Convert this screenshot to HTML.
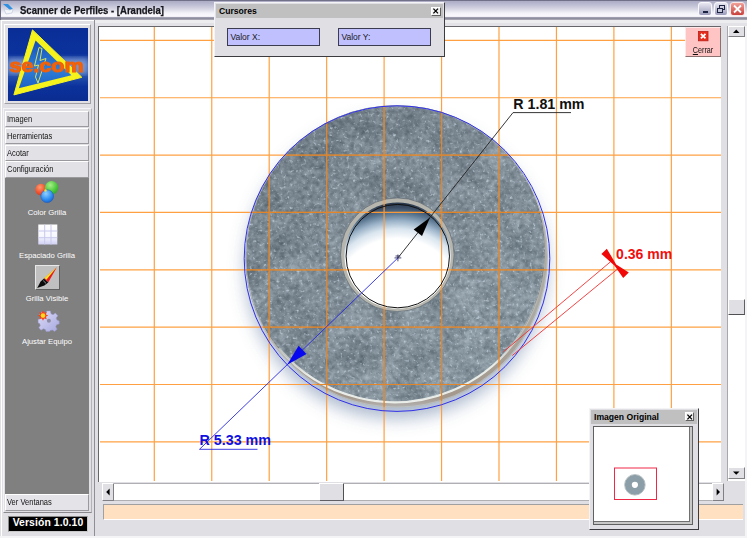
<!DOCTYPE html>
<html lang="es">
<head>
<meta charset="utf-8">
<title>Scanner de Perfiles - [Arandela]</title>
<style>
html,body{margin:0;padding:0;}
body{width:747px;height:538px;overflow:hidden;background:#f4f4f6;position:relative;font-family:"Liberation Sans",sans-serif;color:#000;}
.abs{position:absolute;}
#win{left:0;top:0;width:744.8px;height:536px;background:#e0dfe3;}
#titlebar{left:0;top:0;width:747px;height:20px;background:linear-gradient(to bottom,#6c6c84 0px,#74748c 0.8px,#aeaec6 1.4px,#b4b4cc 3px,#d0d0e0 8px,#f2f2f8 13px,#fafafd 16.4px,#a0a0b4 17.4px,#8c8c9e 18.2px,#90909e 19.2px,#c8c8d0 20px);border-left:1px solid #6a6a82;box-sizing:border-box;}
#title{left:20px;top:3.8px;font-weight:bold;font-size:10.5px;line-height:13px;color:#16161c;-webkit-text-stroke:0.25px #16161c;white-space:nowrap;transform-origin:0 0;transform:scaleX(0.907);}
#band1{left:1px;top:20px;width:746px;height:3px;background:#ededf0;}
#band2{left:1px;top:23px;width:746px;height:3px;background:#e2e2e7;}
.tb{top:2px;width:14px;height:14px;border-radius:3px;box-sizing:border-box;}
/* left panel */
#lp{left:1px;top:20px;width:93px;height:516px;background:#e0dfe3;border-right:1.6px solid #8e8e94;box-shadow:inset 1px 1px 0 #fff;}
#logobox{left:4px;top:24px;width:87px;height:80px;box-sizing:border-box;border:1px solid #fff;border-right-color:#a0a0a4;border-bottom-color:#a0a0a4;background:#e0dfe3;}
.mbtn{left:5px;width:84px;height:16px;box-sizing:border-box;background:#e2e1e6;border:1px solid #fff;border-right-color:#9a9a9e;border-bottom-color:#9a9a9e;font-size:8.2px;line-height:15px;padding-left:1px;color:#111;white-space:nowrap;}
.mbtn span{display:inline-block;transform-origin:0 50%;transform:scaleX(0.92);}
#gray{left:5px;top:178px;width:84px;height:316px;background:#808080;}
.il{left:5px;width:84px;text-align:center;color:#fff;font-size:7.7px;line-height:10px;white-space:nowrap;}
#ver{left:8px;top:516px;width:80px;height:16px;box-sizing:border-box;background:#000;border:1px solid #8a8a8a;border-right-color:#c8c8c8;border-bottom-color:#c8c8c8;color:#fff;font-weight:bold;font-size:10.4px;line-height:12.6px;text-align:center;letter-spacing:0.1px;white-space:nowrap;}
/* canvas */
#cvwrap{left:98.4px;top:25.6px;width:623px;height:456px;background:#fff;border-left:1.4px solid #66666a;border-top:1.4px solid #66666a;box-sizing:border-box;}
#cv{left:100px;top:27px;width:621px;height:454px;background:#fff;overflow:hidden;}
.sbtn{background:#e0dfe3;box-sizing:border-box;border:1px solid #fff;border-right-color:#808084;border-bottom-color:#808084;}
#status{left:103px;top:504px;width:640px;height:16px;background:#ffe0c0;box-sizing:border-box;border-top:1px solid #a0a0a0;border-left:1px solid #a0a0a0;border-bottom:1px solid #fff;}
.fw{background:#e0dfe3;box-sizing:border-box;border:1px solid #f4f4f6;border-right:1.6px solid #3c3c40;border-bottom:1.6px solid #3c3c40;}
.ft{background:#c0c0c0;font-weight:bold;font-size:8.6px;line-height:14.5px;color:#000;white-space:nowrap;box-sizing:border-box;padding-left:3px;}
.fx{background:#f4f4f4;box-sizing:border-box;border:1px solid #fff;border-right-color:#606060;border-bottom-color:#606060;}
.vb{background:#c0c0ff;border:1px solid #3c3c50;box-sizing:border-box;font-size:8.5px;line-height:16px;padding-left:2.4px;color:#181818;white-space:nowrap;height:18px;top:27.6px;}
</style>
</head>
<body>
<div id="win" class="abs"></div>
<div id="titlebar" class="abs"></div>
<div id="band1" class="abs"></div>
<div id="band2" class="abs"></div>
<svg class="abs" style="left:1px;top:2.5px" width="15" height="13" viewBox="0 0 15 13"><path d="M2 1 L7 1 L12 6 L9 7 Z" fill="#2f8fe0"/><path d="M3 6 L9 7 L12 6 L11 10 L5 11 Z" fill="#f4f6fa" stroke="#b8c4d8" stroke-width="0.6"/></svg>
<div id="title" class="abs">Scanner de Perfiles - [Arandela]</div>
<div class="abs tb" style="left:698px;background:linear-gradient(#e8e8f2,#9c9cba);border:1px solid #f8f8fc;"></div>
<div class="abs" style="left:703px;top:11px;width:5px;height:2px;background:#1c2340"></div>
<div class="abs tb" style="left:714px;background:linear-gradient(#e8e8f2,#9c9cba);border:1px solid #f8f8fc;"></div>
<svg class="abs" style="left:714px;top:2px" width="14" height="14"><rect x="5.5" y="3.5" width="5" height="4" fill="none" stroke="#1c2340"/><rect x="3.5" y="6.5" width="5" height="4" fill="#c8c8dc" stroke="#1c2340"/></svg>
<div class="abs tb" style="left:730px;width:15px;background:linear-gradient(#f0a098,#c8403c);border:1px solid #f8e8e8;"></div>
<svg class="abs" style="left:730px;top:2px" width="15" height="14"><path d="M4 3.5 L11 10.5 M11 3.5 L4 10.5" stroke="#fff" stroke-width="1.8"/></svg>

<!-- left panel -->
<div id="lp" class="abs"></div>
<div id="logobox" class="abs"></div>
<svg class="abs" style="left:8px;top:28px" width="80" height="73" viewBox="0 0 80 73">
<defs>
<linearGradient id="lgbg" x1="0" y1="0" x2="0" y2="1"><stop offset="0" stop-color="#0a2e96"/><stop offset="0.35" stop-color="#0b329c"/><stop offset="0.5" stop-color="#3a62b4"/><stop offset="0.62" stop-color="#2c58b0"/><stop offset="0.8" stop-color="#0b329c"/><stop offset="1" stop-color="#0a2c90"/></linearGradient>
<linearGradient id="lgtri" x1="0" y1="0" x2="0" y2="1"><stop offset="0" stop-color="#1450b8"/><stop offset="0.6" stop-color="#2f7fd8"/><stop offset="1" stop-color="#1c60c4"/></linearGradient>
<filter id="b1"><feGaussianBlur stdDeviation="0.4"/></filter>
<filter id="b3"><feGaussianBlur stdDeviation="2.5"/></filter>
</defs>
<rect width="80" height="73" fill="url(#lgbg)"/>
<rect x="0" y="30" width="80" height="16" fill="#aac0e8" opacity="0.55" filter="url(#b3)"/>
<g filter="url(#b1)">
<path d="M24.5 1.9 L73.8 49.3 L5.9 66.9 Z" fill="#f6f21c" stroke="#f6f21c" stroke-width="1" stroke-linejoin="round"/><path d="M27.6 12.4 L63.4 47.2 L10.8 60.2 Z" fill="url(#lgtri)"/>
<path d="M31 19.5 L34 20.5 L32 32.5 L38 30.5 L30 55 L27.5 49 L30.5 37 L26.5 38 Z" fill="none" stroke="#e8ee50" stroke-width="0.9"/>
</g>
<text x="1.5" y="43.5" font-family="Liberation Sans, sans-serif" font-weight="bold" font-size="18" fill="#f26408" stroke="#ee6008" stroke-width="1.1" textLength="74" lengthAdjust="spacingAndGlyphs" filter="url(#b1)">se.com</text>
</svg>
<div class="abs mbtn" style="top:111px"><span>Imagen</span></div>
<div class="abs mbtn" style="top:128px"><span>Herramientas</span></div>
<div class="abs mbtn" style="top:144.5px"><span>Acotar</span></div>
<div class="abs mbtn" style="top:161px;height:17px"><span>Configuración</span></div>
<div class="abs" style="left:3px;top:108px;width:89px;height:404.5px;box-sizing:border-box;border:1px solid #f4f4f6;border-right-color:#b4b4b8;border-bottom-color:#8a8a8e;"></div>
<div id="gray" class="abs"></div>
<!-- icons -->
<svg class="abs" style="left:30px;top:178px" width="36" height="30" viewBox="30 178 36 30">
<defs>
<radialGradient id="gr" cx="0.4" cy="0.3" r="0.8"><stop offset="0" stop-color="#ff9a70"/><stop offset="0.6" stop-color="#f0502c"/><stop offset="1" stop-color="#c83818"/></radialGradient>
<radialGradient id="gg" cx="0.4" cy="0.3" r="0.8"><stop offset="0" stop-color="#a8f088"/><stop offset="0.6" stop-color="#4cc83c"/><stop offset="1" stop-color="#2c9828"/></radialGradient>
<radialGradient id="gb" cx="0.4" cy="0.3" r="0.8"><stop offset="0" stop-color="#90d0ff"/><stop offset="0.6" stop-color="#2c8cf0"/><stop offset="1" stop-color="#1858c0"/></radialGradient>
</defs>
<circle cx="41" cy="189.6" r="5.8" fill="url(#gr)"/>
<circle cx="51.6" cy="187.8" r="6.7" fill="url(#gg)"/>
<circle cx="47.2" cy="196.2" r="6.4" fill="url(#gb)" stroke="#1c58b8" stroke-width="0.5"/>
<circle cx="45.5" cy="190.5" r="1.2" fill="#f4e040"/>
</svg>
<div class="abs il" style="top:207.5px">Color Grilla</div>
<svg class="abs" style="left:38px;top:224px" width="20" height="21" viewBox="0 0 20 21">
<defs><linearGradient id="gg2" x1="0" y1="0" x2="0" y2="1"><stop offset="0" stop-color="#ffffff"/><stop offset="0.6" stop-color="#f6f6ff"/><stop offset="1" stop-color="#d0d0f4"/></linearGradient></defs>
<rect x="0.3" y="0.5" width="19" height="20" fill="url(#gg2)"/>
<path d="M6.7 0.5 V20.5 M13 0.5 V20.5 M0.3 7 H19.3 M0.3 13.7 H19.3" stroke="#c8c8ec" stroke-width="1"/>
</svg>
<div class="abs il" style="top:250.5px">Espaciado Grilla</div>
<div class="abs" style="left:35px;top:265px;width:25px;height:25px;box-sizing:border-box;background:#c0c0c0;border:1px solid #e8e8e8;border-right-color:#606060;border-bottom-color:#606060;"></div>
<svg class="abs" style="left:35px;top:265px" width="25" height="25" viewBox="0 0 25 25">
<path d="M21.8 2.2 L13.2 17.4 L9.2 13.6 Z" fill="#e8181c"/>
<path d="M21.4 2.6 L11.4 14.8 L9.4 13 Z" fill="#f8e428"/>
<path d="M9 13.4 L13.2 17.4 L9.4 20.4 L2.2 23 L5.6 16.4 Z" fill="#0c0c0c"/>
<path d="M8.2 15.6 L11 18.4" stroke="#c8c8c8" stroke-width="0.7"/>
</svg>
<div class="abs il" style="top:293.5px">Grilla Visible</div>
<svg class="abs" style="left:35px;top:308px" width="26" height="26" viewBox="35 308 26 26"><defs><linearGradient id="gearg" x1="0" y1="0" x2="1" y2="1"><stop offset="0" stop-color="#dcdcf8"/><stop offset="1" stop-color="#a8a8e0"/></linearGradient></defs>
<g transform="translate(48.6 321)">
<path id="gear" fill="url(#gearg)" stroke="#9494cc" stroke-width="0.5" d="M-1.8 -10 L1.8 -10 L2.4 -7.2 L4.4 -6.3 L6.8 -7.9 L9.3 -5.3 L7.6 -3 L8.4 -0.9 L10.6 0 L10.6 3 L8 3.8 L7.1 5.8 L8.6 8.2 L6 10.4 L3.7 8.9 L1.6 9.6 L0.8 10.4 L-2.6 10.4 L-3.2 8.6 L-5.2 7.8 L-7.6 9.3 L-9.8 6.8 L-8.3 4.5 L-9 2.5 L-10.5 1.9 L-10.5 -1.6 L-8.7 -2.2 L-7.9 -4.2 L-9.2 -6.6 L-6.8 -8.9 L-4.4 -7.4 L-2.4 -8.2 Z"/>
<circle cx="0.3" cy="-0.3" r="2" fill="#8c8ca4"/>
</g>
<path d="M43.0 310.4 L44.2 312.7 L46.7 311.9 L45.9 314.4 L48.2 315.6 L45.9 316.8 L46.7 319.3 L44.2 318.5 L43.0 320.8 L41.8 318.5 L39.3 319.3 L40.1 316.8 L37.8 315.6 L40.1 314.4 L39.3 311.9 L41.8 312.7 Z" fill="#f04420"/>
<circle cx="43" cy="315.6" r="2.3" fill="#ffd820"/>
</svg>
<div class="abs il" style="top:336.5px">Ajustar Equipo</div>
<div class="abs mbtn" style="top:494px;height:17px;background:#e4e3e8;"><span>Ver Ventanas</span></div>
<div id="ver" class="abs">Versión 1.0.10</div>

<!-- canvas area -->
<div id="cvwrap" class="abs"></div>
<div id="cv" class="abs">
<svg class="abs" style="left:0;top:0" width="621" height="454" viewBox="100 27 621 454">
<defs>
<filter id="sh" x="-20%" y="-20%" width="140%" height="140%"><feGaussianBlur stdDeviation="9"/></filter>
<filter id="tex" x="0" y="0" width="100%" height="100%" color-interpolation-filters="sRGB">
<feTurbulence type="fractalNoise" baseFrequency="0.2" numOctaves="3" seed="7" result="n"/>
<feColorMatrix in="n" type="matrix" values="1 0 0 0 0  1 0 0 0 0  1 0 0 0 0  0 0 0 0 1" result="g"/>
<feTurbulence type="fractalNoise" baseFrequency="0.035" numOctaves="2" seed="11" result="n2"/>
<feColorMatrix in="n2" type="matrix" values="0 1 0 0 0  0 1 0 0 0  0 1 0 0 0  0 0 0 0 1" result="g2"/>
<feComposite in="SourceGraphic" in2="g" operator="arithmetic" k1="0" k2="1" k3="0.27" k4="-0.135" result="c1"/>
<feComposite in="c1" in2="g2" operator="arithmetic" k1="0" k2="1" k3="0.2" k4="-0.1" result="c2"/>
<feTurbulence type="fractalNoise" baseFrequency="0.3" numOctaves="2" seed="23" result="n3"/>
<feColorMatrix in="n3" type="matrix" values="0 0 0 0 0.84  0 0 0 0 0.9  0 0 0 0 0.95  2.4 0 0 0 -1.49" result="sp0"/>
<feGaussianBlur in="sp0" stdDeviation="0.45" result="sp"/>
<feComposite in="sp" in2="c2" operator="over" result="c3"/>
<feComposite in="c3" in2="SourceGraphic" operator="in"/>
</filter>
<linearGradient id="wg" x1="0.15" y1="0.1" x2="0.85" y2="0.95"><stop offset="0" stop-color="#75818a"/><stop offset="0.5" stop-color="#7f8c96"/><stop offset="1" stop-color="#87959f"/></linearGradient>
<linearGradient id="rimg" x1="0" y1="0" x2="0" y2="1"><stop offset="0" stop-color="#b0b4b4"/><stop offset="0.7" stop-color="#aaa8a2"/><stop offset="0.965" stop-color="#a4988c"/><stop offset="1" stop-color="#b4b4b4"/></linearGradient>
<filter id="b05" x="-5%" y="-20%" width="110%" height="140%"><feGaussianBlur stdDeviation="0.6"/></filter>
<linearGradient id="hlg" gradientUnits="userSpaceOnUse" x1="278" y1="0" x2="546" y2="0"><stop offset="0" stop-color="#eef2ee" stop-opacity="0.5"/><stop offset="0.12" stop-color="#eef2ee" stop-opacity="1"/><stop offset="0.8" stop-color="#eef2ee" stop-opacity="1"/><stop offset="1" stop-color="#eef2ee" stop-opacity="0"/></linearGradient>
<radialGradient id="hg" cx="0.5" cy="0.95" r="0.95"><stop offset="0" stop-color="#ffffff"/><stop offset="0.64" stop-color="#ffffff"/><stop offset="0.74" stop-color="#d8e4ee"/><stop offset="0.82" stop-color="#98b0c6"/><stop offset="0.89" stop-color="#5a7690"/><stop offset="0.95" stop-color="#3a4c64"/><stop offset="1" stop-color="#28364a"/></radialGradient>
<clipPath id="oc"><circle cx="396.6" cy="256.4" r="151.2"/></clipPath>
<clipPath id="wc"><path clip-rule="evenodd" d="M245.4 256.4 a151.2 151.2 0 1 0 302.4 0 a151.2 151.2 0 1 0 -302.4 0 Z M340.8 254.7 a56.5 56.5 0 1 0 113 0 a56.5 56.5 0 1 0 -113 0 Z"/></clipPath>
</defs>
<!-- shadow halo -->
<circle cx="396" cy="268" r="150" fill="#9cacc4" opacity="0.9" filter="url(#sh)"/>
<!-- washer -->
<circle cx="396.6" cy="256.4" r="151.2" fill="url(#rimg)"/>
<g clip-path="url(#oc)">
<g filter="url(#tex)"><circle cx="394.2" cy="251.5" r="150.6" fill="url(#wg)"/></g>
<path d="M278.8 348.3 A150.6 150.6 0 0 0 544.2 238.4" fill="none" stroke="url(#hlg)" stroke-width="2.2" opacity="0.95" filter="url(#b05)"/>
</g>
<circle cx="396.6" cy="256.4" r="150.7" fill="none" stroke="#c0c8c8" stroke-width="1" opacity="0.7"/>
<!-- hole -->
<circle cx="397.3" cy="254.7" r="56.8" fill="#b6b6ae"/>
<circle cx="397.3" cy="254.7" r="56.8" fill="none" stroke="#5c6874" stroke-width="1" opacity="0.7"/>
<circle cx="397.6" cy="255.6" r="53.2" fill="url(#hg)"/>
<!-- grid -->
<g stroke="#ff9c38" stroke-width="1.2" opacity="0.95">
<path d="M154.30 27V481M211.75 27V481M269.20 27V481M326.65 27V481M384.10 27V481M441.55 27V481M499.00 27V481M556.45 27V481M613.90 27V481M671.35 27V481"/>
<path d="M100 40.40H721M100 97.75H721M100 155.10H721M100 212.45H721M100 269.80H721M100 327.15H721M100 384.50H721M100 441.85H721"/>
</g>
<g stroke="#c86c10" stroke-width="1.2" opacity="0.45" clip-path="url(#wc)">
<path d="M154.30 27V481M211.75 27V481M269.20 27V481M326.65 27V481M384.10 27V481M441.55 27V481M499.00 27V481M556.45 27V481M613.90 27V481M671.35 27V481"/>
<path d="M100 40.40H721M100 97.75H721M100 155.10H721M100 212.45H721M100 269.80H721M100 327.15H721M100 384.50H721M100 441.85H721"/>
</g>
<!-- circles -->
<circle cx="397" cy="258.6" r="152.8" fill="none" stroke="#3030e8" stroke-width="1"/>
<circle cx="397.8" cy="256.1" r="51.7" fill="none" stroke="#101010" stroke-width="1"/>
<!-- black radius -->
<path d="M397.9 257.9 L513 112.6 H571" fill="none" stroke="#202020" stroke-width="0.9"/>
<path d="M430.1 217.4 L422 236.1 L413.7 229.5 Z" fill="#000"/>
<text x="513.3" y="108.6" font-family="Liberation Sans, sans-serif" font-weight="bold" font-size="14" fill="#101010" textLength="71.2" lengthAdjust="spacingAndGlyphs">R 1.81 mm</text>
<!-- blue radius -->
<path d="M397.9 257.9 L199.5 449.3 H257.5" fill="none" stroke="#2828e0" stroke-width="0.9"/>
<path d="M287.2 364.7 L306.5 353.9 L298.6 345.7 Z" fill="#0808f0"/>
<text x="199.5" y="444.9" font-family="Liberation Sans, sans-serif" font-weight="bold" font-size="14" fill="#1010e0" textLength="71.5" lengthAdjust="spacingAndGlyphs">R 5.33 mm</text>
<!-- center cross -->
<path d="M394.5 257.9 H401.3 M397.9 254.5 V261.3 M395.5 256 H400.3" stroke="#1c1c50" stroke-width="0.8"/>
<!-- red measure -->
<path d="M503.4 351.8 L610.6 261.7 M512.3 355.5 L617.6 269" stroke="#f03030" stroke-width="0.9" fill="none"/>
<path d="M601.4 253.9 L606.8 248.7 L616.2 264.4 L628.8 272.6 L623.2 278 L614.6 265.8 Z" fill="#f00808"/>
<text x="616.1" y="259.4" font-family="Liberation Sans, sans-serif" font-weight="bold" font-size="14" fill="#f01010" textLength="56.2" lengthAdjust="spacingAndGlyphs">0.36 mm</text>
</svg>
</div>
<!-- Cerrar button -->
<div class="abs" style="left:685px;top:27px;width:36px;height:30px;box-sizing:border-box;background:#ffc4c4;border:1px solid #ffe8e8;border-right-color:#8c7070;border-bottom-color:#8c7070;"></div>
<svg class="abs" style="left:698px;top:31.4px" width="11" height="11"><rect x="0.4" y="0.4" width="9.6" height="9.4" fill="#e82c1c" stroke="#b82018" stroke-width="0.8"/><path d="M2.9 2.8 L7.5 7.4 M7.5 2.8 L2.9 7.4" stroke="#fff" stroke-width="1.8"/></svg>
<div class="abs" style="left:685px;top:45.4px;width:36px;text-align:center;font-size:8.2px;line-height:11px;color:#101010;white-space:nowrap;transform:scaleX(0.88);"><span style="text-decoration:underline">C</span>errar</div>

<!-- scrollbars -->
<div class="abs" style="left:727px;top:26px;width:18px;height:455px;background:#fff;border-left:1px solid #a8a8ac;box-sizing:border-box;"></div>
<div class="abs sbtn" style="left:728px;top:26px;width:17px;height:11px;"></div>
<svg class="abs" style="left:728px;top:26px" width="17" height="11"><path d="M5 7 L11.5 7 L8.25 3.6 Z" fill="#000"/></svg>
<div class="abs sbtn" style="left:728px;top:467px;width:17px;height:12px;"></div>
<svg class="abs" style="left:728px;top:467px" width="17" height="12"><path d="M5 4.4 L11.5 4.4 L8.25 7.8 Z" fill="#000"/></svg>
<div class="abs sbtn" style="left:728px;top:299px;width:17px;height:16px;border-right-color:#606064;border-bottom-color:#505054;"></div>
<div class="abs" style="left:102px;top:483px;width:622px;height:18px;background:#fff;box-sizing:border-box;border-top:1px solid #b0b0b4;border-bottom:1px solid #b0b0b4;"></div>
<div class="abs sbtn" style="left:102px;top:483px;width:12px;height:18px;"></div>
<svg class="abs" style="left:102px;top:483px" width="12" height="18"><path d="M7.6 5.5 L7.6 12.5 L4.2 9 Z" fill="#000"/></svg>
<div class="abs sbtn" style="left:712px;top:483px;width:12px;height:18px;"></div>
<svg class="abs" style="left:712px;top:483px" width="12" height="18"><path d="M4.6 5.5 L4.6 12.5 L8 9 Z" fill="#000"/></svg>
<div class="abs sbtn" style="left:319px;top:483px;width:25px;height:18px;border-right-color:#505054;border-bottom-color:#606064;"></div>
<div id="status" class="abs"></div>

<!-- Cursores window -->
<div class="abs fw" style="left:214px;top:2px;width:231px;height:55px;"></div>
<div class="abs ft" style="left:216px;top:4px;width:227px;height:13.5px;">Cursores</div>
<div class="abs fx" style="left:431px;top:6.5px;width:9.5px;height:9px;"></div>
<svg class="abs" style="left:431px;top:6px" width="10" height="10"><path d="M2.4 2.6 L7 7.4 M7 2.6 L2.4 7.4" stroke="#000" stroke-width="1.3"/></svg>
<div class="abs vb" style="left:227px;width:93px;">Valor X:</div>
<div class="abs vb" style="left:338px;width:93px;">Valor Y:</div>

<!-- Imagen Original window -->
<div class="abs fw" style="left:589px;top:408px;width:110px;height:122px;"></div>
<div class="abs ft" style="left:591px;top:410px;width:106px;height:13.5px;">Imagen Original</div>
<div class="abs fx" style="left:684.5px;top:412px;width:9.5px;height:9px;"></div>
<svg class="abs" style="left:684.5px;top:411.5px" width="10" height="10"><path d="M2.4 2.6 L7 7.4 M7 2.6 L2.4 7.4" stroke="#000" stroke-width="1.3"/></svg>
<div class="abs" style="left:593px;top:426px;width:100px;height:99px;box-sizing:border-box;background:#fff;border:1px solid #606060;box-shadow:inset -2px -2px 0 #c8c8c8, inset -3px -3px 0 #707070;"></div>
<svg class="abs" style="left:593px;top:426px" width="100" height="99" viewBox="593 426 100 99">
<rect x="614.5" y="468" width="42" height="31.5" fill="none" stroke="#f02848" stroke-width="1"/>
<circle cx="634.9" cy="484.8" r="6.6" fill="none" stroke="#8c9ea8" stroke-width="7"/>
<circle cx="634.9" cy="484.8" r="10.3" fill="none" stroke="#a8b4b8" stroke-width="0.8"/>
</svg>
</body>
</html>
